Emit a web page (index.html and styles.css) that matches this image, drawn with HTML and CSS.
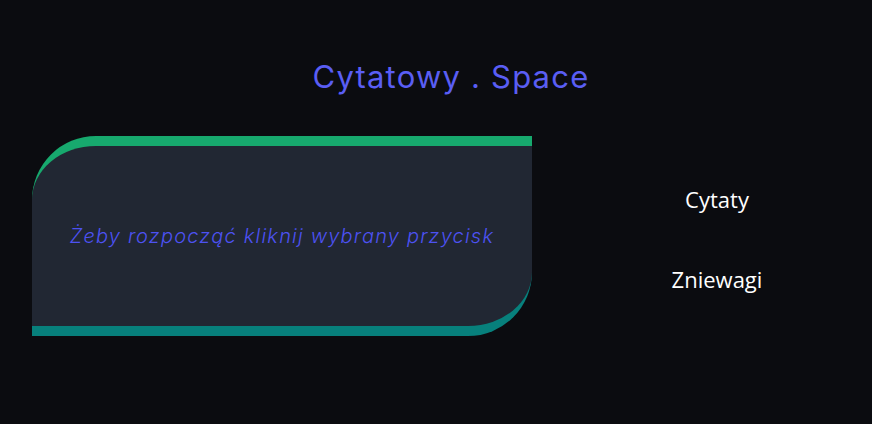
FILE: index.html
```html
<!DOCTYPE html>
<html lang="pl">
<head>
<meta charset="utf-8">
<title>Cytatowy . Space</title>
<link rel="stylesheet" href="styles.css">
</head>
<body>
<header class="header">
  <h1 class="title">Cytatowy . Space</h1>
</header>
<main class="content">
  <section class="card">
    <p class="card-text">Żeby rozpocząć kliknij wybrany przycisk</p>
  </section>
  <nav class="actions">
    <button class="action">Cytaty</button>
    <button class="action">Zniewagi</button>
  </nav>
</main>
</body>
</html>
```
FILE: styles.css
```css
* { box-sizing: border-box; }
html, body { margin: 0; padding: 0; }
body {
  background: #0b0c10;
  width: 872px;
  height: 424px;
  overflow: hidden;
  font-family: "Open Sans", "Noto Sans", sans-serif;
}
.header {
  padding: 56px 0 0 30px;
  text-align: center;
}
.title {
  margin: 0;
  font-family: "Inter", "Open Sans", sans-serif;
  font-weight: 400;
  font-size: 31px;
  line-height: 42px;
  color: #5a5ef4;
  letter-spacing: 1.2px;
}
.content {
  display: flex;
  align-items: flex-start;
  padding: 38px 0 0 32px;
}
.card {
  width: 500px;
  height: 200px;
  background: #212733;
  border-top: 10px solid #17a96e;
  border-bottom: 10px solid #07807c;
  border-radius: 64px 0 64px 0;
  display: flex;
  align-items: center;
  justify-content: center;
}
.card-text {
  margin: 0;
  font-family: "Inter", "Open Sans", sans-serif;
  font-style: italic;
  font-weight: 300;
  font-size: 20px;
  color: #4d52f2;
  letter-spacing: 1.2px;
}
.actions {
  display: flex;
  flex-direction: column;
  align-items: center;
  gap: 50px;
  width: 200px;
  margin: 48px 0 0 85px;
}
.action {
  background: none;
  border: none;
  padding: 0;
  font-family: "Open Sans", "Noto Sans", sans-serif;
  font-size: 22px;
  line-height: 30px;
  color: #ffffff;
  cursor: pointer;
}
```
